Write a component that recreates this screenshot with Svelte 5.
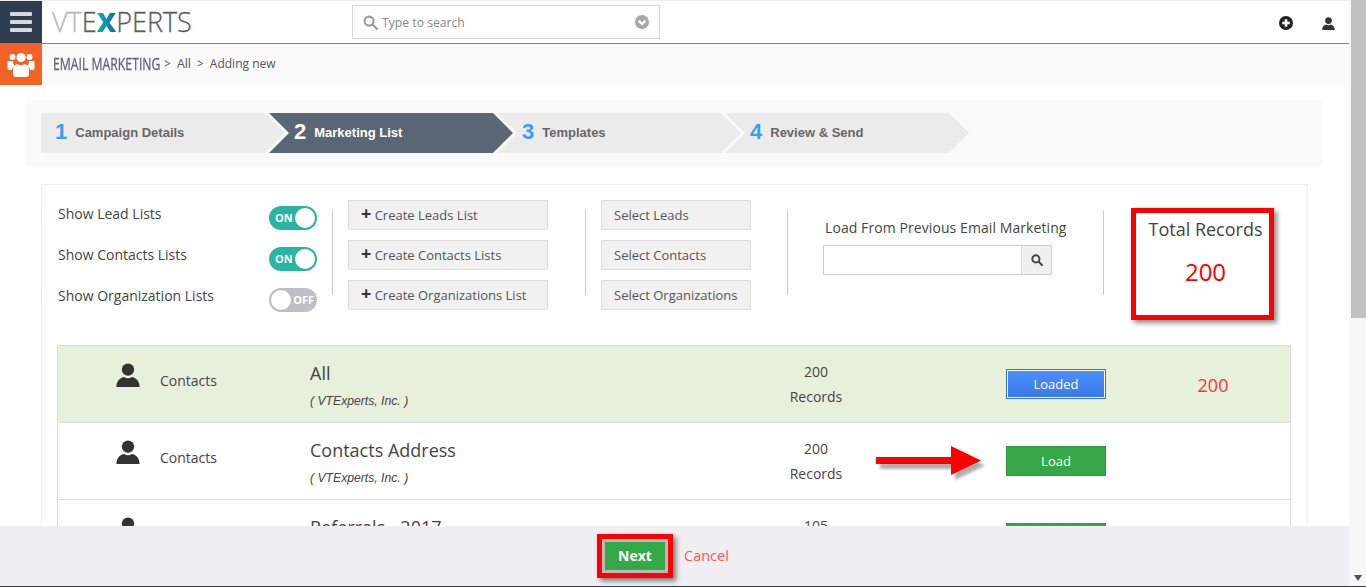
<script>
  const steps = [
    { num: "1", name: "Campaign Details" },
    { num: "2", name: "Marketing List", active: true },
    { num: "3", name: "Templates" },
    { num: "4", name: "Review & Send" },
  ];

  const toggles = [
    { label: "Show Lead Lists", on: true },
    { label: "Show Contacts Lists", on: true },
    { label: "Show Organization Lists", on: false },
  ];

  const createButtons = ["Create Leads List", "Create Contacts Lists", "Create Organizations List"];
  const selectButtons = ["Select Leads", "Select Contacts", "Select Organizations"];

  const lists = [
    { name: "All", count: 200, loaded: true },
    { name: "Contacts Address", count: 200, arrow: true },
    { name: "Referrals - 2017", count: 105 },
  ];
</script>

{#snippet userIcon(size)}
  <svg class="user" width={size} height={size} viewBox="0 0 24 24" fill="#333">
    <circle cx="12" cy="6.6" r="6.2"></circle>
    <path d="M0.4 24 C0.4 17.5 4.5 14.6 8 14 C10.5 15.6 13.5 15.6 16 14 C19.5 14.6 23.6 17.5 23.6 24 Z"></path>
  </svg>
{/snippet}

<div class="page">
  <div class="main">
    <header class="topbar">
      <button class="menu" aria-label="Menu">
        <span></span><span></span><span></span>
      </button>
      <div class="logo"><span class="vt">VT</span>E<span class="x">X</span>PERTS</div>
      <div class="search">
        <svg width="15" height="15" viewBox="0 0 16 16" fill="none" stroke="#9a9a9a" stroke-width="2.2">
          <circle cx="6.5" cy="6.5" r="4.8"></circle>
          <line x1="10" y1="10" x2="15" y2="15" stroke-linecap="round"></line>
        </svg>
        <span>Type to search</span>
        <svg class="chev" width="14" height="14" viewBox="0 0 14 14">
          <circle cx="7" cy="7" r="7" fill="#a8a8a8"></circle>
          <path d="M3.6 5.6 L7 9 L10.4 5.6" fill="none" stroke="#fff" stroke-width="2.2"></path>
        </svg>
      </div>
      <div class="top-icons">
        <svg width="14" height="14" viewBox="0 0 14 14">
          <circle cx="7" cy="7" r="7" fill="#222"></circle>
          <path d="M7 3.2 V10.8 M3.2 7 H10.8" stroke="#fff" stroke-width="2.6"></path>
        </svg>
        {@render userIcon(13)}
      </div>
    </header>

    <div class="crumbs">
      <div class="module-icon">
        <svg width="28" height="28" viewBox="0 0 28 28" fill="#fff">
          <circle cx="5.5" cy="6" r="3"></circle>
          <circle cx="22.5" cy="6" r="3"></circle>
          <circle cx="14" cy="6.5" r="4.6"></circle>
          <path d="M0.5 10 H6 C6 13 7 14 8 15 C6 16 5 18 5 19 H2 C1 19 0.5 18 0.5 17 Z"></path>
          <path d="M27.5 10 H22 C22 13 21 14 20 15 C22 16 23 18 23 19 H26 C27 19 27.5 18 27.5 17 Z"></path>
          <path d="M10 13 C12 14.5 16 14.5 18 13 C20.5 14 22 16 22 19 V23 C22 25 21 26 19 26 H9 C7 26 6 25 6 23 V19 C6 16 7.5 14 10 13 Z"></path>
        </svg>
      </div>
      <span class="module"><span>EMAIL MARKETING</span></span>
      <span class="sep">&gt;</span>
      <span class="crumb">All</span>
      <span class="sep">&gt;</span>
      <span class="crumb">Adding new</span>
    </div>

    <div class="wizard">
      {#each steps as step, i}
        <div class="step" class:first={i === 0} class:active={step.active}>
          <span class="num">{step.num}</span>
          <span class="step-name">{step.name}</span>
        </div>
      {/each}
    </div>

    <section class="card">
      <div class="controls">
        <div class="toggles">
          {#each toggles as t}
            <div class="toggle-row">
              <span>{t.label}</span>
              <span class="toggle" class:on={t.on}>
                <b>{t.on ? "ON" : "OFF"}</b>
                <i></i>
              </span>
            </div>
          {/each}
        </div>
        <div class="divider"></div>
        <div class="btn-col create">
          {#each createButtons as label}
            <button class="grey-btn"><span class="plus">+</span> {label}</button>
          {/each}
        </div>
        <div class="divider"></div>
        <div class="btn-col select">
          {#each selectButtons as label}
            <button class="grey-btn">{label}</button>
          {/each}
        </div>
        <div class="divider"></div>
        <div class="previous">
          <div class="previous-label">Load From Previous Email Marketing</div>
          <div class="input-group">
            <div class="input"></div>
            <div class="addon">
              <svg width="12" height="12" viewBox="0 0 16 16" fill="none" stroke="#444" stroke-width="2.6">
                <circle cx="6.5" cy="6.5" r="4.8"></circle>
                <line x1="10" y1="10" x2="15" y2="15" stroke-linecap="round"></line>
              </svg>
            </div>
          </div>
        </div>
        <div class="divider"></div>
        <div class="total">
          <div class="total-label">Total Records</div>
          <div class="total-value">200</div>
        </div>
      </div>

      <div class="list">
        {#each lists as row}
          <div class="row" class:loaded={row.loaded}>
            <div class="row-icon">{@render userIcon(24)}</div>
            <div class="row-type">Contacts</div>
            <div class="row-name">
              <div class="name">{row.name}</div>
              <div class="owner">( VTExperts, Inc. )</div>
            </div>
            <div class="row-count">
              <div>{row.count}</div>
              <div>Records</div>
            </div>
            <div class="row-action">
              {#if row.loaded}
                <button class="btn-loaded">Loaded</button>
              {:else}
                <button class="btn-load">Load</button>
              {/if}
              {#if row.arrow}
                <svg class="arrow" width="116" height="44" viewBox="0 0 116 44">
                  <defs><filter id="soft"><feGaussianBlur stdDeviation="1.6"></feGaussianBlur></filter></defs>
                  <path d="M0 13 H75 V2 L105 16.5 L75 31 V20 H0 Z" fill="#777" opacity="0.6" transform="translate(4 5)" filter="url(#soft)"></path>
                  <path d="M0 13 H75 V2 L105 16.5 L75 31 V20 H0 Z" fill="#f00"></path>
                </svg>
              {/if}
            </div>
            <div class="row-total">{row.loaded ? row.count : ""}</div>
          </div>
        {/each}
      </div>
    </section>

    <footer class="footer">
      <div class="next-box"><button class="next">Next</button></div>
      <span class="cancel">Cancel</span>
    </footer>
  </div>

  <div class="scrollbar">
    <div class="thumb"></div>
    <span class="down"></span>
  </div>
</div>

<style>
  :global(body) {
    overflow: hidden;
    background: #fff;
  }

  .page {
    position: relative;
    display: flex;
    height: 587px;
    overflow: hidden;
    font-family: "Open Sans", sans-serif;
    color: #444;
    border-bottom: 1px solid #2c3e50;
    box-sizing: border-box;
  }

  .main {
    position: relative;
    width: 1349px;
    flex-shrink: 0;
    overflow: hidden;
  }

  /* Top bar */
  .topbar {
    display: flex;
    align-items: center;
    height: 42px;
    margin-top: 1px;
    border-bottom: 1px solid #e2603a;
    box-shadow: 0 -1px 0 #eee;
  }

  .menu {
    display: flex;
    flex-direction: column;
    justify-content: center;
    gap: 4px;
    width: 42px;
    height: 42px;
    padding: 0 10px;
    border: none;
    background: #2c3e50;
  }

  .menu span {
    display: block;
    height: 4px;
    border-radius: 1px;
    background: #d5d8dc;
  }

  .logo {
    margin-left: 10px;
    width: 300px;
    font-size: 27px;
    font-weight: 300;
    letter-spacing: 0;
    color: #5c5f62;
    line-height: 42px;
    -webkit-text-stroke: 0.3px currentColor;
  }

  .vt {
    color: #b9b9b9;
  }

  .x {
    font-weight: 800;
    -webkit-text-stroke: 0;
    background: linear-gradient(90deg, #10b3b0, #0f6fa8);
    -webkit-background-clip: text;
    background-clip: text;
    color: transparent;
  }

  .search {
    display: flex;
    align-items: center;
    gap: 4px;
    width: 286px;
    height: 32px;
    padding: 0 10px;
    border: 1px solid #d8d8d8;
    font-size: 12.2px;
    color: #888;
    box-sizing: content-box;
  }

  .chev {
    margin-left: auto;
  }

  .top-icons {
    display: flex;
    align-items: center;
    gap: 29px;
    margin: 2px 14px 0 auto;
  }

  /* Breadcrumb */
  .crumbs {
    display: flex;
    align-items: center;
    height: 41px;
    background: #fafafa;
    font-size: 12px;
  }

  .module-icon {
    display: flex;
    align-items: center;
    justify-content: center;
    width: 42px;
    height: 41px;
    background: #f26126;
    margin-right: 11px;
  }

  .module {
    width: 105px;
    margin-top: -3px;
    font-size: 17px;
    color: #5f6672;
    white-space: nowrap;
  }

  /* the product heading uses a condensed face that is not installed */
  .module span {
    display: inline-block;
    transform: scaleX(0.72);
    transform-origin: left center;
    -webkit-text-stroke: 0.3px currentColor;
  }

  .sep {
    margin: -3px 6px 0;
    color: #555;
  }

  .crumb {
    margin-top: -3px;
    font-size: 12.4px;
    color: #555;
  }

  .crumb:last-child {
    font-size: 12px;
  }

  /* Wizard steps */
  .wizard {
    display: flex;
    height: 40px;
    margin: 15px 26px 0 26px;
    padding: 13px 15px;
    background: #fafafa;
  }

  .step {
    display: flex;
    align-items: center;
    flex-shrink: 0;
    gap: 8px;
    width: 244px;
    margin-right: -16px;
    padding-left: 25px;
    padding-bottom: 2px;
    box-sizing: border-box;
    background: #ebebeb;
    font-family: "Liberation Sans", sans-serif;
    font-size: 13px;
    font-weight: 700;
    color: #666;
    clip-path: polygon(0 0, 224px 0, 100% 50%, 224px 100%, 0 100%, 20px 50%);
  }

  .step.first {
    padding-left: 14px;
    clip-path: polygon(0 0, 224px 0, 100% 50%, 224px 100%, 0 100%);
  }

  .step.active {
    background: #596674;
    color: #fff;
  }

  .num {
    font-size: 22px;
    color: #3b9bff;
  }

  .active .num {
    color: #fff;
  }

  /* Main card */
  .card {
    margin: 18px 0 0 41px;
    width: 1267px;
    height: 500px;
    padding-top: 15px;
    box-sizing: border-box;
    border: 1px solid #f0f0f0;
  }

  .controls {
    display: flex;
    align-items: flex-start;
    height: 145px;
    padding-left: 16px;
    font-size: 14px;
  }

  .toggles {
    display: flex;
    flex-direction: column;
    gap: 17px;
    width: 259px;
    margin: 6px 15px 0 0;
  }

  .toggle-row {
    display: flex;
    justify-content: space-between;
    height: 24px;
    line-height: 16px;
  }

  .toggle {
    position: relative;
    display: block;
    width: 48px;
    height: 24px;
    border-radius: 12px;
    background: #bcbfc6;
  }

  .toggle.on {
    background: #2ab5a3;
  }

  .toggle b {
    position: absolute;
    top: 5px;
    right: 3px;
    font-size: 11px;
    line-height: 14px;
    color: #fff;
  }

  .toggle.on b {
    left: 6px;
    right: auto;
  }

  .toggle i {
    position: absolute;
    top: 2px;
    left: 2px;
    width: 20px;
    height: 20px;
    border-radius: 50%;
    background: #fff;
  }

  .toggle.on i {
    left: auto;
    right: 2px;
  }

  .divider {
    width: 1px;
    height: 85px;
    margin-top: 10px;
    background: #ccc;
    flex-shrink: 0;
  }

  .btn-col {
    display: flex;
    flex-direction: column;
    gap: 10px;
    flex-shrink: 0;
  }

  .create {
    width: 200px;
    margin: 0 37px 0 15px;
  }

  .select {
    width: 150px;
    margin: 0 36px 0 15px;
  }

  .grey-btn {
    height: 30px;
    padding: 0 12px;
    border: 1px solid #ddd;
    background: #f1f1f1;
    font-family: inherit;
    font-size: 13px;
    color: #555;
    text-align: left;
    white-space: nowrap;
  }

  .plus {
    font-size: 18px;
    font-weight: 700;
    line-height: 13px;
    color: #333;
  }

  .previous {
    width: 229px;
    margin: 19px 51px 0 35px;
    flex-shrink: 0;
    text-align: center;
  }

  .previous-label {
    margin-left: 2px;
    font-size: 14px;
    line-height: 18px;
    letter-spacing: 0.08px;
    white-space: nowrap;
  }

  .input-group {
    display: flex;
    height: 30px;
    margin-top: 8px;
    border: 1px solid #ccc;
    box-sizing: border-box;
  }

  .input {
    flex: 1;
    background: #fff;
  }

  .addon {
    display: flex;
    align-items: center;
    justify-content: center;
    width: 29px;
    background: #efefef;
    border-left: 1px solid #ddd;
  }

  .total {
    width: 143px;
    height: 112px;
    margin: 8px 0 0 27px;
    padding-left: 6px;
    flex-shrink: 0;
    box-sizing: border-box;
    border: 5px solid #f00;
    box-shadow: 3px 3px 5px #8a8a8a;
    text-align: center;
  }

  .total-label {
    margin-top: 3px;
    font-size: 18px;
    line-height: 26px;
    color: #444;
  }

  .total-value {
    margin-top: 15px;
    font-size: 24px;
    line-height: 30px;
    color: #f00;
  }

  /* List rows */
  .list {
    margin-left: 15px;
    width: 1234px;
    border: 1px solid #ddd;
    border-bottom: none;
    box-sizing: border-box;
    height: 200px;
  }

  .row {
    display: grid;
    grid-template-columns: 102px 150px 406px 200px 90px 100px 29px 156px;
    height: 77px;
    box-sizing: border-box;
    border-bottom: 1px solid #ddd;
    font-size: 14px;
  }

  .row.loaded {
    background: #e7f0da;
  }

  .row-icon {
    padding: 17px 0 0 58px;
  }

  .row-type {
    padding-top: 25px;
    line-height: 19px;
  }

  .name {
    margin-top: 14px;
    font-size: 18px;
    line-height: 26px;
    color: #444;
  }

  .owner {
    margin-top: 8px;
    font-family: "Liberation Sans", sans-serif;
    font-size: 12.2px;
    font-style: italic;
    line-height: 14px;
    color: #444;
  }

  .row-count {
    padding-top: 13px;
    line-height: 25px;
    text-align: center;
  }

  .row-action {
    position: relative;
    grid-column: 6;
    padding-top: 23px;
  }

  .row-total {
    grid-column: 8;
    padding-top: 26px;
    font-size: 18px;
    line-height: 26px;
    color: #f33;
    text-align: center;
  }

  .btn-loaded,
  .btn-load {
    display: block;
    width: 100px;
    height: 30px;
    font-family: inherit;
    font-size: 13px;
    color: #fff;
  }

  .btn-loaded {
    border: 1px solid #2f73d9;
    outline: 1px solid #fff;
    outline-offset: -2px;
    background: linear-gradient(#4d90fe, #3a78e6);
  }

  .btn-load {
    border: 1px solid #2f9a40;
    background: #34a846;
  }

  .arrow {
    position: absolute;
    top: 21px;
    left: -130px;
  }

  /* Sticky footer over the list */
  .footer {
    position: absolute;
    left: 0;
    right: 0;
    bottom: 0;
    display: flex;
    align-items: center;
    gap: 11px;
    height: 60px;
    padding-left: 597px;
    box-sizing: border-box;
    background: #efeef0;
  }

  .next-box {
    display: flex;
    border: 5px solid #f00;
    box-shadow: 3px 3px 5px #7a7a7a;
  }

  .next {
    width: 66px;
    height: 34px;
    padding: 0 0 2px;
    border: 3px solid #b9b9b9;
    background: #34a846;
    font-family: inherit;
    font-size: 14px;
    font-weight: 700;
    color: #fff;
  }

  .cancel {
    margin-top: -1px;
    font-size: 14.5px;
    color: #f55;
  }

  /* Browser scrollbar */
  .scrollbar {
    position: relative;
    flex: 1;
    padding-left: 2px;
    background: #f6f6f6;
  }

  .thumb {
    height: 318px;
    background: #c1c1c1;
  }

  .down {
    position: absolute;
    left: 5px;
    bottom: 5px;
    border: 4px solid transparent;
    border-top: 6px solid #505050;
    border-bottom: none;
  }
</style>
